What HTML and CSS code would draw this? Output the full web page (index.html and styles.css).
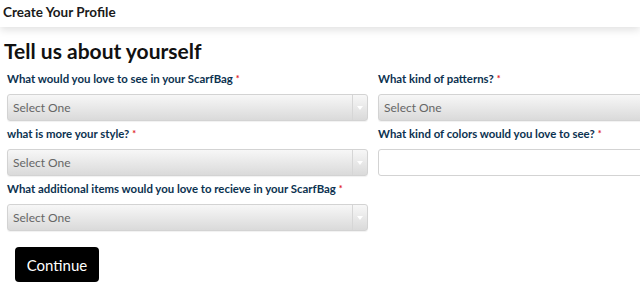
FILE: index.html
```html
<!DOCTYPE html>
<html lang="en">

<head>
    <meta charset="UTF-8">
    <meta name="viewport" content="width=device-width, initial-scale=1.0">
    <title>Create Your Profile</title>
    <link rel="stylesheet" href="styles.css">
</head>

<body>
    <header class="topbar">Create Your Profile</header>

    <main class="page">
        <h1>Tell us about yourself</h1>

        <form class="profile-form">
            <div class="form-grid">
                <div class="field">
                    <label>What would you love to see in your ScarfBag<span class="req">*</span></label>
                    <div class="select-box">
                        <select><option>Select One</option></select>
                        <span class="select-arrow"></span>
                    </div>
                </div>
                <div class="field">
                    <label>What kind of patterns?<span class="req">*</span></label>
                    <div class="select-box">
                        <select><option>Select One</option></select>
                        <span class="select-arrow"></span>
                    </div>
                </div>
                <div class="field">
                    <label>what is more your style?<span class="req">*</span></label>
                    <div class="select-box">
                        <select><option>Select One</option></select>
                        <span class="select-arrow"></span>
                    </div>
                </div>
                <div class="field">
                    <label>What kind of colors would you love to see?<span class="req">*</span></label>
                    <input type="text" class="text-input">
                </div>
                <div class="field">
                    <label>What additional items would you love to recieve in your ScarfBag<span class="req">*</span></label>
                    <div class="select-box">
                        <select><option>Select One</option></select>
                        <span class="select-arrow"></span>
                    </div>
                </div>
            </div>

            <button type="submit">Continue</button>
        </form>
    </main>
</body>
</html>
```

FILE: styles.css
```css
body {
    font-family: 'Lato', 'Open Sans', sans-serif;
    background-color: #fff;
    color: #111;
    margin: 0;
    padding: 0;
    overflow: hidden;
}

.topbar {
    height: 27px;
    line-height: 25px;
    padding-left: 3px;
    font-size: 13.5px;
    font-weight: 700;
    color: #1a1a1a;
    background: #fff;
    box-shadow: 0 3px 8px rgba(0, 0, 0, 0.12);
}

.page {
    padding: 0 0 0 7px;
    overflow: hidden;
}

h1 {
    font-size: 21px;
    font-weight: 700;
    margin: 11px 0 3px -3px;
    line-height: 26px;
    color: #111;
}

.form-grid {
    display: grid;
    grid-template-columns: 361px 260px;
    column-gap: 10px;
    row-gap: 1px;
}

.field label {
    display: block;
    font-size: 11.4px;
    font-weight: 700;
    color: #0c3250;
    line-height: 14px;
    margin: 5px 0 8px;
    white-space: nowrap;
}

.req {
    color: #e0201e;
    font-size: 9px;
    vertical-align: top;
    margin-left: 3px;
}

.select-box {
    display: flex;
    height: 27px;
    box-sizing: border-box;
    border: 1px solid #d3d3d3;
    border-radius: 3px;
    background: linear-gradient(#f7f7f7, #dadada);
    box-shadow: 0 1px 1px rgba(0, 0, 0, 0.06);
}

.form-grid .field:nth-child(2) .select-box {
    margin-right: -20px;
}

.select-box select {
    flex: 1;
    min-width: 0;
    appearance: none;
    -webkit-appearance: none;
    border: none;
    background: transparent;
    font-family: 'Lato', sans-serif;
    font-size: 12px;
    color: #666;
    padding: 0 5px;
    outline: none;
}

.select-arrow {
    width: 14px;
    border-left: 1px solid #d6d6d6;
    display: flex;
    align-items: center;
    justify-content: center;
}

.select-arrow::after {
    content: "";
    border-left: 3px solid transparent;
    border-right: 3px solid transparent;
    border-top: 4px solid #fff;
}

.text-input {
    display: block;
    width: calc(100% + 20px);
    height: 27px;
    box-sizing: border-box;
    border: 1px solid #d3d3d3;
    border-radius: 3px;
    background: #fff;
}

button {
    margin: 16px 0 0 8px;
    width: 84px;
    height: 35px;
    border: none;
    border-radius: 4px;
    background: #000;
    color: #fff;
    font-family: 'Lato', sans-serif;
    font-size: 15px;
    cursor: pointer;
}
```
